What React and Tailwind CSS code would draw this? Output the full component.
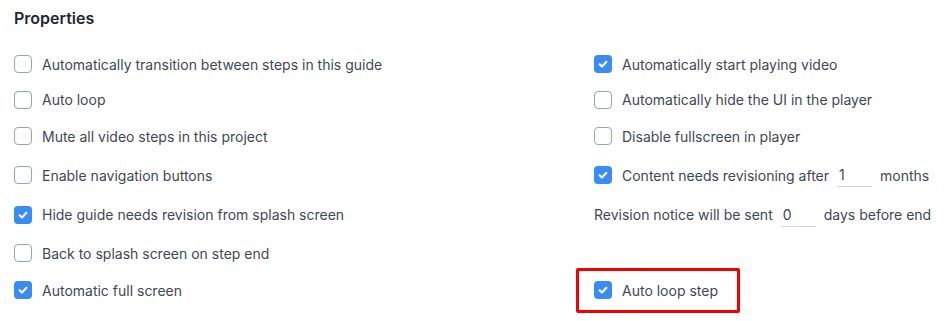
import React from "react";

function Box({ checked }) {
  return checked ? (
    <span className="flex h-[18px] w-[18px] shrink-0 items-center justify-center rounded-[4px] bg-[#3a8cf0]">
      <svg width="12" height="12" viewBox="0 0 12 12" fill="none">
        <path d="M2.6 6.2 L5 8.5 L9.4 3.8" stroke="white" strokeWidth="2" strokeLinecap="round" strokeLinejoin="round" />
      </svg>
    </span>
  ) : (
    <span className="h-[18px] w-[18px] shrink-0 rounded-[4px] border border-[#9aa3b2] bg-white" />
  );
}

function Item({ checked, children }) {
  return (
    <div className="flex items-center gap-[10px]">
      <Box checked={checked} />
      <span>{children}</span>
    </div>
  );
}

function Line({ value }) {
  return (
    <span className="flex h-[24px] w-[35px] items-center border-b border-[#d5d9df] pl-[2px] text-[#3f4756]">
      {value}
    </span>
  );
}

export default function App() {
  const rows = [36, 35, 38, 40, 39, 38, 36];
  return (
    <div
      className="h-[321px] w-[948px] bg-white text-[14px] text-[#3f4756]"
      style={{ fontFamily: "Inter, 'Noto Sans', sans-serif" }}
    >
      <div className="px-[14px] pt-[6px] text-[16px] font-semibold leading-[24px] text-[#1f2733]">Properties</div>
      <div
        className="mt-[16px] grid grid-cols-[580px_1fr] pl-[14px]"
        style={{ gridTemplateRows: rows.map((r) => r + "px").join(" ") }}
      >
        <div className="flex items-center"><Item>Automatically transition between steps in this guide</Item></div>
        <div className="flex items-center"><Item checked>Automatically start playing video</Item></div>

        <div className="flex items-center"><Item>Auto loop</Item></div>
        <div className="flex items-center"><Item>Automatically hide the UI in the player</Item></div>

        <div className="flex items-center"><Item>Mute all video steps in this project</Item></div>
        <div className="flex items-center"><Item>Disable fullscreen in player</Item></div>

        <div className="flex items-center"><Item>Enable navigation buttons</Item></div>
        <div className="flex items-center gap-[10px]">
          <Box checked />
          <span>Content needs revisioning after</span>
          <span className="ml-[-2px]"><Line value="1" /></span>
          <span className="ml-[-2px]">months</span>
        </div>

        <div className="flex items-center"><Item checked>Hide guide needs revision from splash screen</Item></div>
        <div className="flex items-center gap-[8px]">
          <span>Revision notice will be sent</span>
          <Line value="0" />
          <span>days before end</span>
        </div>

        <div className="flex items-center"><Item>Back to splash screen on step end</Item></div>
        <div />

        <div className="flex items-center"><Item checked>Automatic full screen</Item></div>
        <div className="flex items-center">
          <div className="ml-[-18px] flex h-[45px] w-[164px] items-center rounded-[2px] border-[3px] border-[#f00000] pl-[15px]">
            <Item checked>Auto loop step</Item>
          </div>
        </div>
      </div>
    </div>
  );
}
